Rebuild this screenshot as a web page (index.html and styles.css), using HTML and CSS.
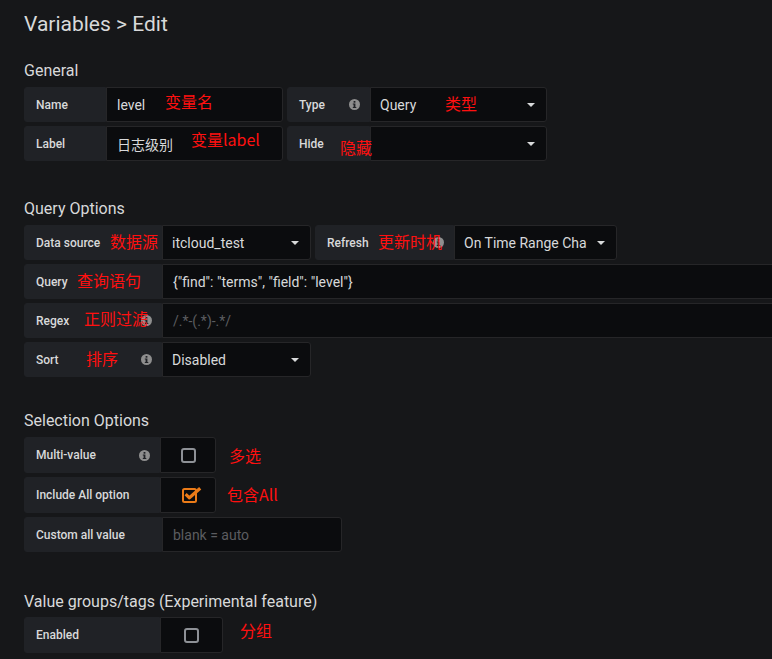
FILE: index.html
```html
<!DOCTYPE html>
<html>
<head>
<meta charset="utf-8">
<link rel="stylesheet" href="styles.css">
</head>
<body>
<div class="page">
  <h2 class="page-title">Variables &gt; Edit</h2>

  <h5 class="section-heading sh-general">General</h5>
  <div class="form-row">
    <div class="group">
      <div class="form-label w82">Name</div>
      <div class="form-input w177">level</div>
    </div>
    <div class="group">
      <div class="form-label w83">Type<span class="info"><svg viewBox="0 0 11 11" width="11" height="11"><circle cx="5.5" cy="5.5" r="5.5" fill="#8e8e8e"/><rect x="4.6" y="2" width="1.8" height="1.7" fill="#202226"/><path d="M3.8 4.5h2.6v3.4h0.9v1.1H3.8V7.9h0.8V5.6h-0.8z" fill="#202226"/></svg></span></div>
      <div class="form-select w177"><span class="sel-text">Query</span><span class="caret"></span></div>
    </div>
    <span class="note n-name">变量名</span>
    <span class="note n-type">类型</span>
  </div>
  <div class="form-row">
    <div class="group">
      <div class="form-label w82">Label</div>
      <div class="form-input w177 cjk">日志级别</div>
    </div>
    <div class="group">
      <div class="form-label w83">Hide</div>
      <div class="form-select w177"><span class="sel-text"></span><span class="caret"></span></div>
    </div>
    <span class="note n-label">变量label</span>
    <span class="note n-hide">隐藏</span>
  </div>

  <h5 class="section-heading sh-query">Query Options</h5>
  <div class="form-row">
    <div class="group">
      <div class="form-label w138">Data source</div>
      <div class="form-select w149"><span class="sel-text">itcloud_test</span><span class="caret"></span></div>
    </div>
    <div class="group">
      <div class="form-label w139">Refresh<span class="info"><svg viewBox="0 0 11 11" width="11" height="11"><circle cx="5.5" cy="5.5" r="5.5" fill="#8e8e8e"/><rect x="4.6" y="2" width="1.8" height="1.7" fill="#202226"/><path d="M3.8 4.5h2.6v3.4h0.9v1.1H3.8V7.9h0.8V5.6h-0.8z" fill="#202226"/></svg></span></div>
      <div class="form-select w163"><span class="sel-text">On Time Range Cha</span><span class="caret"></span></div>
    </div>
    <span class="note n-ds">数据源</span>
    <span class="note n-refresh">更新时机</span>
  </div>
  <div class="form-row">
    <div class="group">
      <div class="form-label w138">Query</div>
      <div class="form-input wide">{"find": "terms", "field": "level"}</div>
    </div>
    <span class="note n-query">查询语句</span>
  </div>
  <div class="form-row">
    <div class="group">
      <div class="form-label w138">Regex<span class="info"><svg viewBox="0 0 11 11" width="11" height="11"><circle cx="5.5" cy="5.5" r="5.5" fill="#8e8e8e"/><rect x="4.6" y="2" width="1.8" height="1.7" fill="#202226"/><path d="M3.8 4.5h2.6v3.4h0.9v1.1H3.8V7.9h0.8V5.6h-0.8z" fill="#202226"/></svg></span></div>
      <div class="form-input wide placeholder">/.*-(.*)-.*/</div>
    </div>
    <span class="note n-regex">正则过滤</span>
  </div>
  <div class="form-row">
    <div class="group">
      <div class="form-label w138">Sort<span class="info"><svg viewBox="0 0 11 11" width="11" height="11"><circle cx="5.5" cy="5.5" r="5.5" fill="#8e8e8e"/><rect x="4.6" y="2" width="1.8" height="1.7" fill="#202226"/><path d="M3.8 4.5h2.6v3.4h0.9v1.1H3.8V7.9h0.8V5.6h-0.8z" fill="#202226"/></svg></span></div>
      <div class="form-select w149"><span class="sel-text">Disabled</span><span class="caret"></span></div>
    </div>
    <span class="note n-sort">排序</span>
  </div>

  <h5 class="section-heading sh-selection">Selection Options</h5>
  <div class="form-row tall">
    <div class="group">
      <div class="form-label w136">Multi-value<span class="info"><svg viewBox="0 0 11 11" width="11" height="11"><circle cx="5.5" cy="5.5" r="5.5" fill="#8e8e8e"/><rect x="4.6" y="2" width="1.8" height="1.7" fill="#202226"/><path d="M3.8 4.5h2.6v3.4h0.9v1.1H3.8V7.9h0.8V5.6h-0.8z" fill="#202226"/></svg></span></div>
      <div class="form-check w56"><span class="checkbox"></span></div>
    </div>
    <span class="note n-multi">多选</span>
  </div>
  <div class="form-row tall">
    <div class="group">
      <div class="form-label w136">Include All option</div>
      <div class="form-check w56"><svg class="checked" viewBox="0 0 20 17" width="20" height="17"><rect x="1" y="3" width="13" height="13" rx="1.5" fill="none" stroke="#eb7b18" stroke-width="2"/><path d="M3.6 8.2l3.8 3.6 L18.2 2.2" fill="none" stroke="#eb7b18" stroke-width="3.2" stroke-linejoin="round"/></svg></div>
    </div>
    <span class="note n-all">包含All</span>
  </div>
  <div class="form-row">
    <div class="group">
      <div class="form-label w138">Custom all value</div>
      <div class="form-input w180 placeholder">blank = auto</div>
    </div>
  </div>

  <h5 class="section-heading sh-tags">Value groups/tags (Experimental feature)</h5>
  <div class="form-row tall">
    <div class="group">
      <div class="form-label w136">Enabled</div>
      <div class="form-check w63"><span class="checkbox"></span></div>
    </div>
    <span class="note n-tags">分组</span>
  </div>
</div>
</body>
</html>
```

FILE: styles.css
```css
* { box-sizing: border-box; }
html, body {
  margin: 0;
  padding: 0;
  background: #161719;
  overflow: hidden;
}
body {
  font-family: Roboto, "Noto Sans CJK SC", sans-serif;
  color: #d8d9da;
}
.page {
  width: 772px;
  height: 659px;
  overflow: hidden;
  padding: 12px 0 0 24px;
}
.page-title {
  margin: 0;
  font-size: 21px;
  font-weight: 400;
  line-height: 24px;
  color: #d8d9da;
}
.section-heading {
  margin: 0 0 7px;
  font-size: 16px;
  font-weight: 400;
  line-height: 19px;
  color: #d8d9da;
}
.sh-general { margin-top: 25px; }
.sh-query { margin-top: 38px; }
.sh-selection { margin-top: 34px; }
.sh-tags { margin-top: 40px; margin-bottom: 6px; }

.form-row {
  position: relative;
  display: flex;
  gap: 4px;
  height: 35px;
  margin-bottom: 4px;
}
.form-row.tall { height: 36px; }
.group {
  display: flex;
  flex-shrink: 0;
}
.form-label,
.form-input,
.form-select,
.form-check {
  flex-shrink: 0;
  display: flex;
  align-items: center;
  height: 100%;
}
.form-label {
  padding: 0 11px;
  background: #202226;
  border: 1px solid #202226;
  border-radius: 3px 0 0 3px;
  font-size: 12px;
  font-weight: 500;
  color: #d8d9da;
  white-space: nowrap;
}
.info {
  margin-left: auto;
  margin-right: -2px;
  display: flex;
}
.form-input,
.form-select,
.form-check {
  background: #0b0c0e;
  border: 1px solid #262628;
  border-radius: 0 3px 3px 0;
  font-size: 14px;
  color: #d8d9da;
  white-space: nowrap;
}
.form-input { padding: 0 10px; }
.cjk { font-family: "Noto Sans CJK SC", Roboto, sans-serif; font-size: 14px; }
.placeholder { color: #5c5d60; }
.form-select {
  padding: 0 0 0 9px;
  position: relative;
}
.sel-text {
  flex: 1;
  white-space: nowrap;
  margin-right: 28px;
}
.caret {
  position: absolute;
  right: 11px;
  top: 50%;
  margin-top: -2px;
  width: 0;
  height: 0;
  border-left: 4px solid transparent;
  border-right: 4px solid transparent;
  border-top: 4px solid #d8d9da;
}
.form-check { justify-content: center; }
.checkbox {
  width: 15px;
  height: 15px;
  border: 2px solid #8e9196;
  border-radius: 3px;
}
.checked { margin-left: 8px; margin-top: -2px; }

.w56 { width: 56px; }
.w63 { width: 63px; }
.w82 { width: 82px; }
.w83 { width: 83px; }
.w136 { width: 136px; }
.w138 { width: 138px; }
.w139 { width: 139px; }
.w149 { width: 149px; }
.w163 { width: 163px; }
.w177 { width: 177px; }
.w180 { width: 180px; }
.wide { width: 640px; }

.note {
  position: absolute;
  font-family: "Noto Sans CJK SC", sans-serif;
  font-size: 16px;
  line-height: 16px;
  color: #ff1010;
  white-space: nowrap;
}
.n-name { left: 141px; top: 6px; }
.n-label { left: 167px; top: 5px; }
.n-type { left: 421px; top: 8px; }
.n-hide { left: 316px; top: 13px; }
.n-ds { left: 86px; top: 8px; }
.n-refresh { left: 354px; top: 8px; }
.n-query { left: 53px; top: 8px; }
.n-regex { left: 60px; top: 7px; }
.n-sort { left: 62px; top: 8px; }
.n-multi { left: 205px; top: 10px; }
.n-all { left: 203px; top: 9px; }
.n-tags { left: 216px; top: 5px; }
```
